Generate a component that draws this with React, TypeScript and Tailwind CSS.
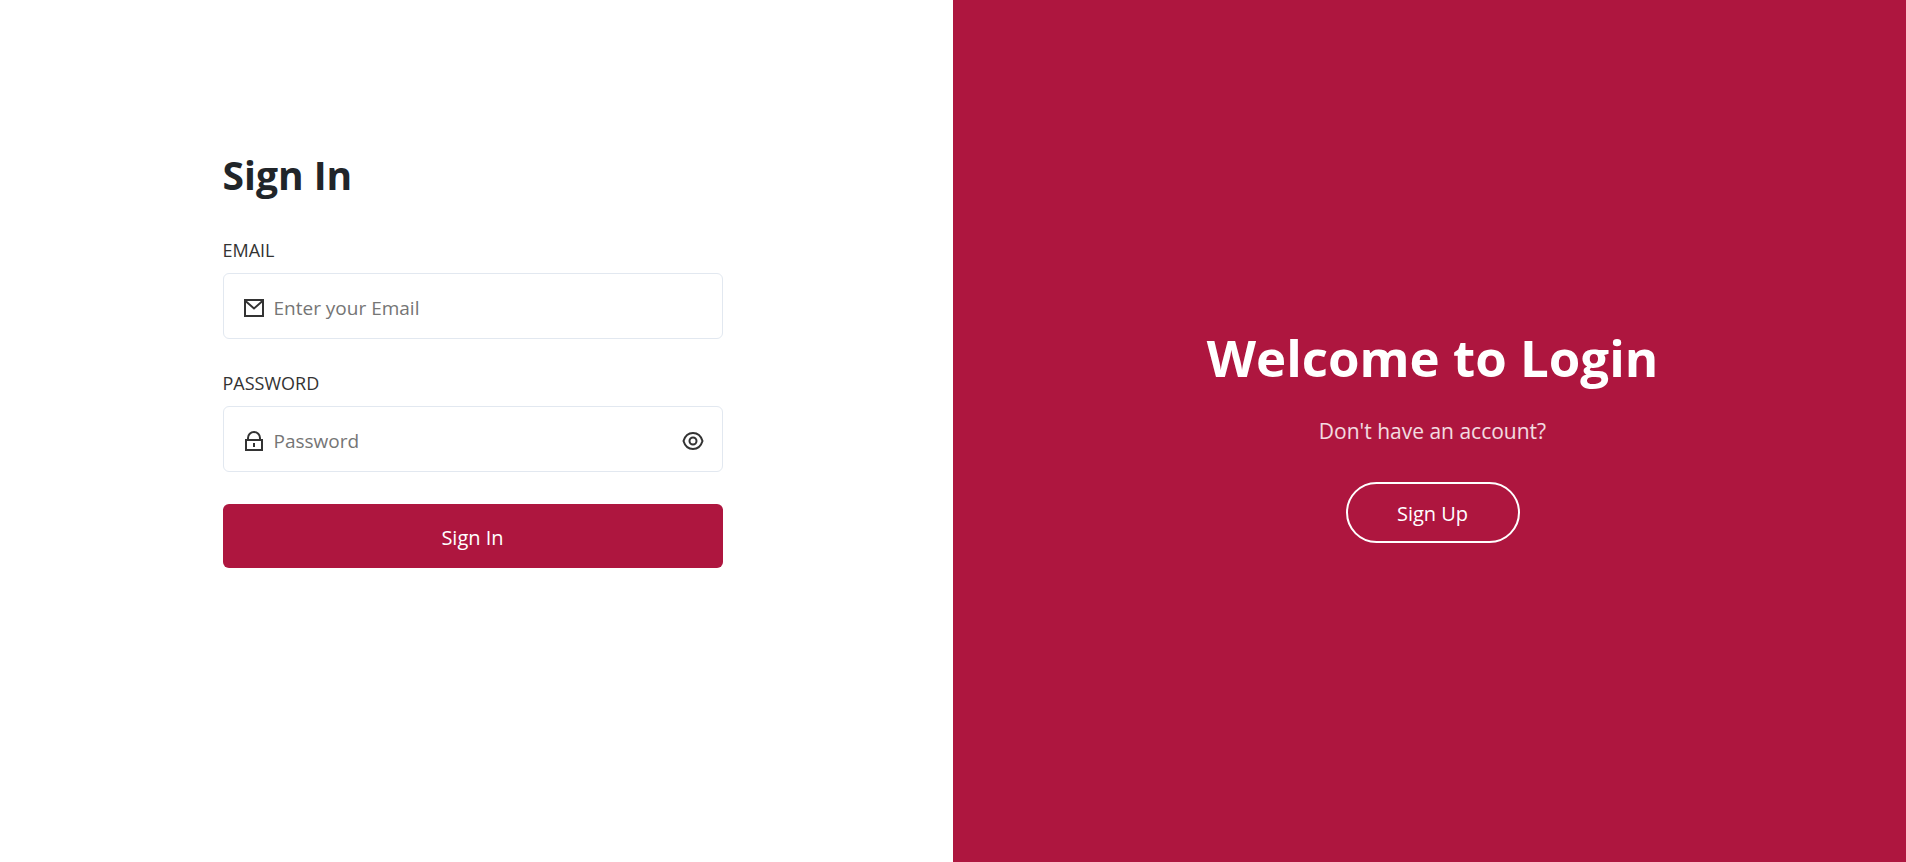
import { useState } from "react";
import type { ReactNode } from "react";

function MailIcon() {
  return (
    <svg width="20" height="20" viewBox="0 0 20 20" fill="none" stroke="currentColor" strokeWidth="2" aria-hidden="true">
      <path d="M1 2h18v16H1z" />
      <path d="M1.5 3l8.5 7.500L18.500 3" />
    </svg>
  );
}

function LockIcon() {
  return (
    <svg width="20" height="20" viewBox="0 0 20 20" fill="none" stroke="currentColor" strokeWidth="2" aria-hidden="true">
      <path d="M2 9h16v10H2z" />
      <path d="M4 9V7a6 6 0 0 1 12 0v2M10 12v4" />
    </svg>
  );
}

function EyeIcon() {
  return (
    <svg width="22" height="20" viewBox="0 0 22 20" fill="none" stroke="currentColor" strokeWidth="2" aria-hidden="true">
      <path d="M1.500 10C3 5 6.500 2 11 2s8 3 9.500 8c-1.500 5-5 8-9.500 8S3 15 1.500 10z" />
      <circle cx="11" cy="10" r="3.500" />
    </svg>
  );
}

type FieldProps = {
  id: string;
  label: string;
  type: string;
  placeholder: string;
  icon: ReactNode;
  action?: ReactNode;
};

function Field({ id, label, type, placeholder, icon, action }: FieldProps) {
  return (
    <div>
      <label htmlFor={id} className="block text-[18px] leading-6 text-[#333]">
        {label}
      </label>
      <div className="mt-[11px] flex h-[66px] items-center rounded-md border border-[#e2e8f0] pt-1 pr-[18px] pl-5 text-[#333]">
        {icon}
        <input
          id={id}
          type={type}
          placeholder={placeholder}
          className="ml-2.5 min-w-0 flex-1 bg-transparent text-[19px] leading-7 outline-none placeholder:text-[#757575]"
        />
        {action}
      </div>
    </div>
  );
}

export default function App() {
  const [visible, setVisible] = useState(false);
  return (
    <div className="grid min-h-screen grid-cols-2 bg-white font-['Open_Sans','Noto_Sans',sans-serif]">
      <main className="flex justify-center pt-[149px] pr-8 pl-6">
        <form className="flex w-full max-w-[500px] flex-col" onSubmit={(e) => e.preventDefault()}>
          <h1 className="text-[39px] leading-[52px] font-bold text-[#212529]">Sign In</h1>
          <div className="mt-[37px] flex flex-col gap-8">
            <Field id="email" label="EMAIL" type="email" placeholder="Enter your Email" icon={<MailIcon />} />
            <Field
              id="password"
              label="PASSWORD"
              type={visible ? "text" : "password"}
              placeholder="Password"
              icon={<LockIcon />}
              action={
                <button type="button" aria-label="Toggle password visibility" onClick={() => setVisible(!visible)}>
                  <EyeIcon />
                </button>
              }
            />
            <button type="submit" className="h-16 rounded-md bg-[#ae163f] pt-1 text-[20px] leading-7 text-white">
              Sign In
            </button>
          </div>
        </form>
      </main>
      <section className="flex flex-col items-center justify-center bg-[#ae163f] pt-1.5 pl-1.5 text-white">
        <h2 className="text-[51px] leading-[64px] font-bold">Welcome to Login</h2>
        <p className="mt-[26px] text-[21px] leading-8 text-white/85">Don't have an account?</p>
        <button
          type="button"
          className="mt-[35px] h-[61px] w-[174px] rounded-full border-2 border-white pt-0.5 text-[20px] leading-7"
        >
          Sign Up
        </button>
      </section>
    </div>
  );
}
